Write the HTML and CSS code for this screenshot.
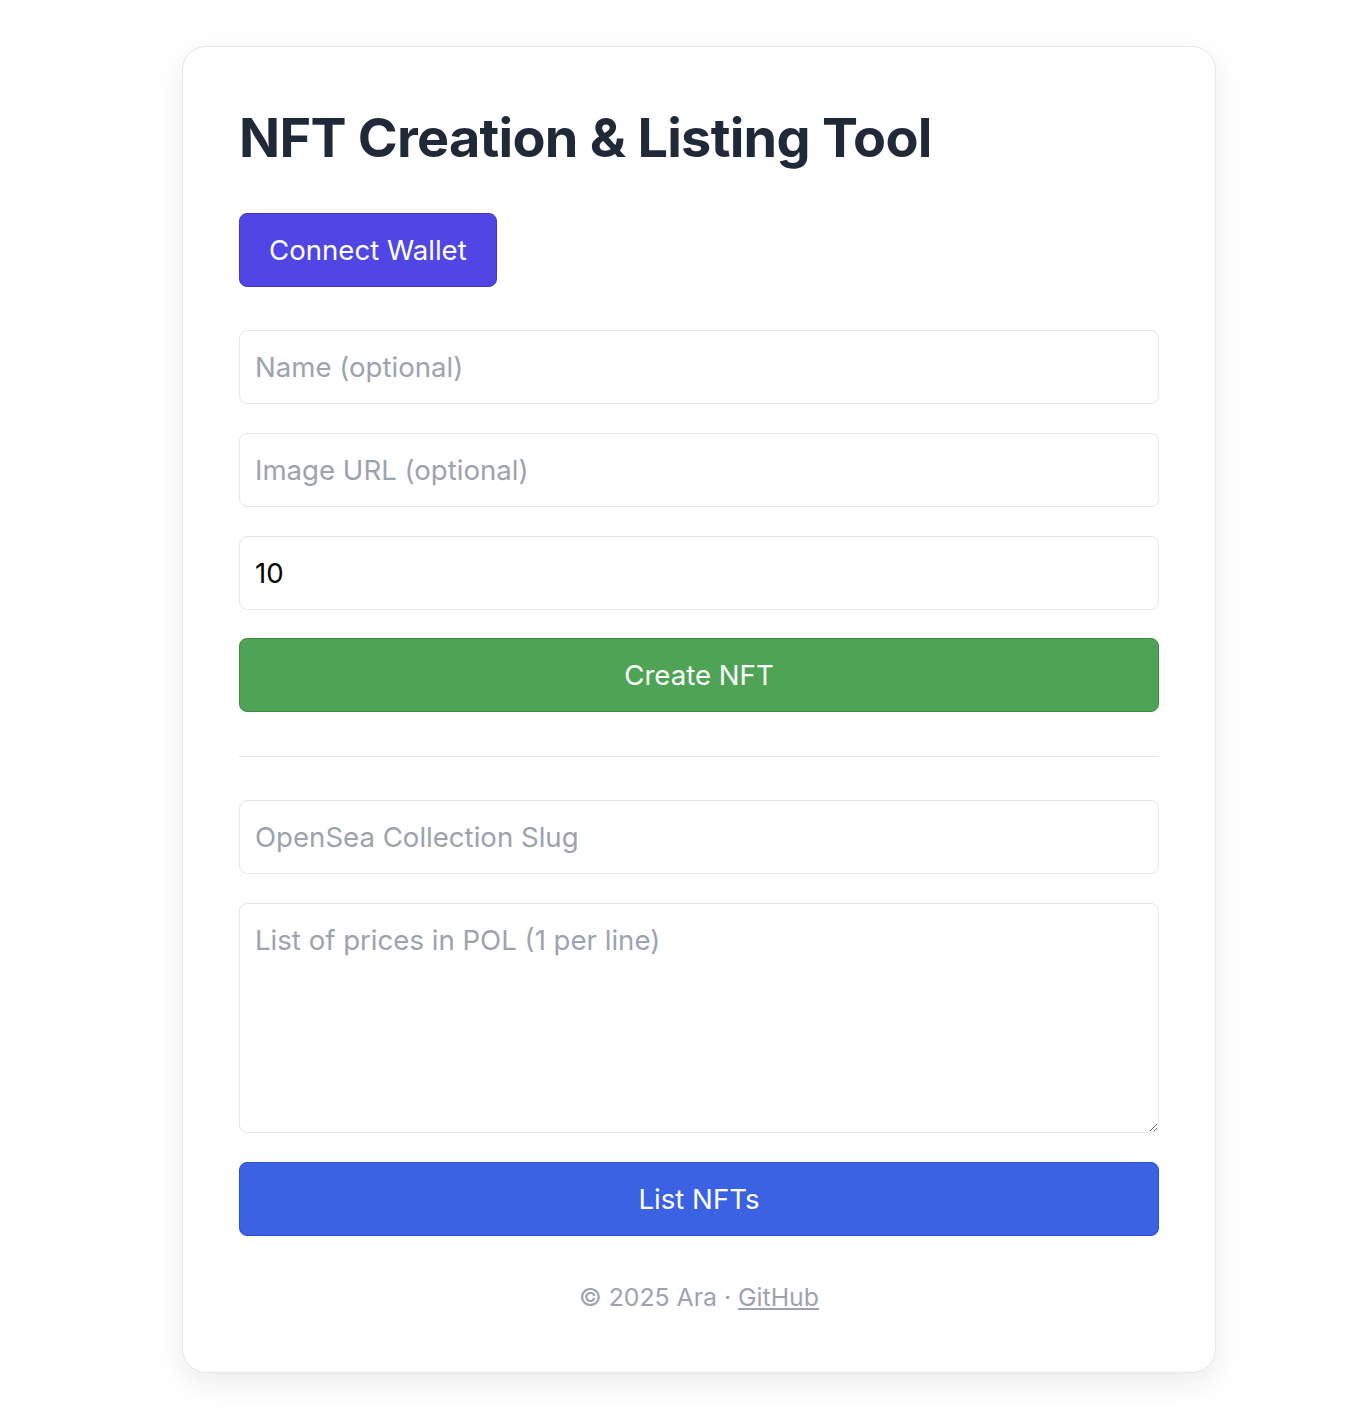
FILE: index.html
```html
<!DOCTYPE html>
<html>
<head>
<meta charset="utf-8">
<link rel="stylesheet" href="styles.css">
</head>
<body>
<div class="page">
  <div class="card">
    <h1 class="title">NFT Creation &amp; Listing Tool</h1>
    <div class="wallet-row"><button class="btn btn-wallet">Connect Wallet</button></div>
    <div class="form">
      <input class="field" type="text" placeholder="Name (optional)">
      <input class="field" type="text" placeholder="Image URL (optional)">
      <input class="field field-value" type="text" value="10">
      <button class="btn btn-full btn-green">Create NFT</button>
    </div>
    <hr class="divider">
    <div class="form">
      <input class="field" type="text" placeholder="OpenSea Collection Slug">
      <textarea class="field area" placeholder="List of prices in POL (1 per line)"></textarea>
      <button class="btn btn-full btn-blue">List NFTs</button>
    </div>
    <p class="footer">© 2025 Ara · <a class="footer-link" href="#">GitHub</a></p>
  </div>
</div>
</body>
</html>
```

FILE: styles.css
```css
html, body {
  margin: 0;
  padding: 0;
  background: #ffffff;
  font-family: Inter, "Liberation Sans", sans-serif;
}
.page {
  padding: 46px 0 40px 182px;
}
.card {
  box-sizing: border-box;
  width: 1034px;
  background: #fff;
  border: 1px solid #e5e7eb;
  border-radius: 24px;
  box-shadow: 0 10px 30px rgba(0, 0, 0, 0.08);
  padding: 56px 56px 60px;
}
.title {
  margin: 0;
  font-size: 54px;
  line-height: 70px;
  font-weight: 700;
  letter-spacing: -0.0135em;
  color: #1f2937;
}
.wallet-row {
  margin-top: 40px;
}
.btn {
  font-family: inherit;
  font-size: 27.6px;
  color: #fff;
  height: 74px;
  border-radius: 8px;
  cursor: pointer;
}
.btn-wallet {
  background: #4f46e5;
  border: 1px solid #4338ca;
  padding: 0 29px;
}
.form {
  display: flex;
  flex-direction: column;
  gap: 29px;
  margin-top: 43px;
}
.field {
  box-sizing: border-box;
  width: 100%;
  height: 74px;
  border: 1px solid #e5e7eb;
  border-radius: 8px;
  padding: 0 15px;
  font-family: inherit;
  font-size: 27.6px;
  color: #000;
  background: #fff;
  outline: none;
}
.field::placeholder {
  color: #9ca3af;
}
.area {
  height: 230px;
  padding: 19px 15px;
  resize: vertical;
  display: block;
}
.btn-full {
  width: 100%;
}
.btn-green {
  background: #4fa355;
  border: 1px solid #3f8a45;
  margin-top: -1px;
}
.btn-blue {
  background: #3a62e3;
  border: 1px solid #2b50d0;
}
.divider {
  border: 0;
  border-top: 1px solid #e5e7eb;
  margin: 44px 0 0;
}
.footer {
  margin: 46px 0 0;
  text-align: center;
  font-size: 24.8px;
  line-height: 30px;
  color: #9ca3af;
}
.footer-link {
  color: #9ca3af;
  text-decoration: underline;
}
```
